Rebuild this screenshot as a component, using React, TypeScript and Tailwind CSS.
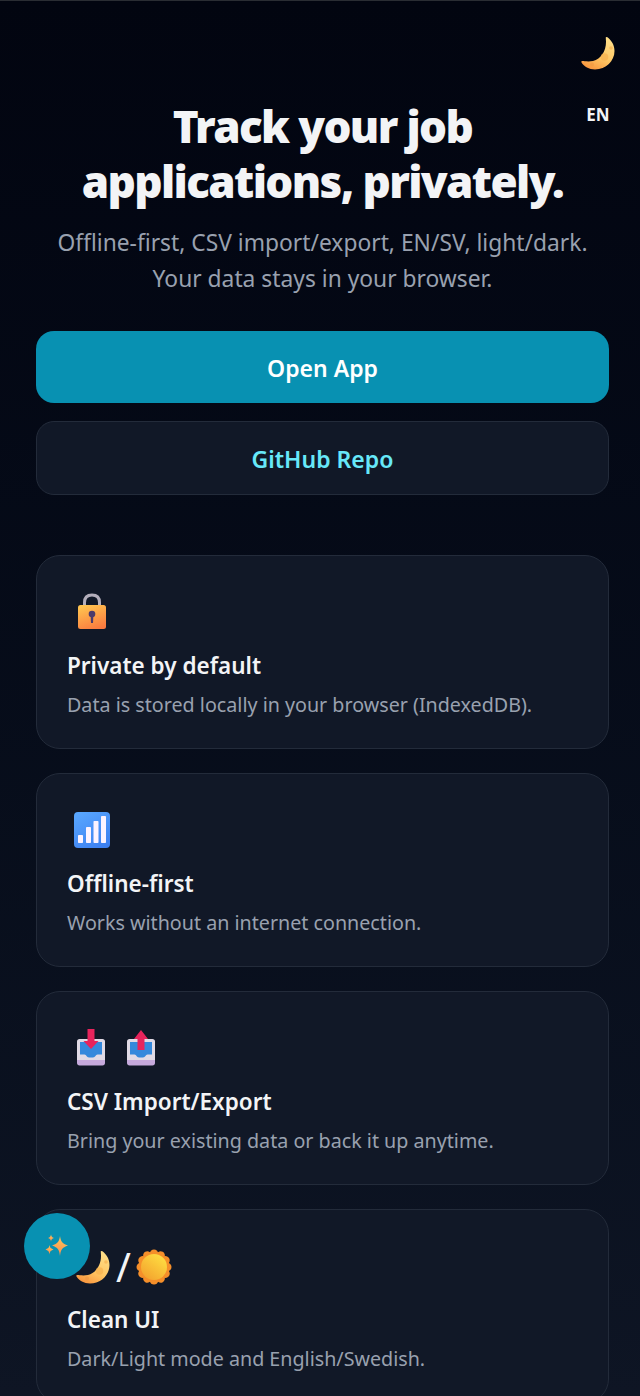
import type { ReactNode } from "react";

function Moon({ size = 36 }: { size?: number }) {
  return (
    <svg width={size} height={size} viewBox="0 0 36 36">
      <defs>
        <linearGradient id="moonFill" x1="0.8" y1="0" x2="0.3" y2="1">
          <stop offset="0" stopColor="#ffe08a" />
          <stop offset="0.6" stopColor="#ffc663" />
          <stop offset="1" stopColor="#f9973f" />
        </linearGradient>
      </defs>
      <path
        d="M26 2 C25.5 2.5 26 4 26 7 C26 16 21 24 13 26 C8 27 4 26 2.500 26 C1.500 26 1 26.500 1.500 27.500 C4 31.500 9 34.500 15 34.500 C26 34.500 34.500 26 34.500 16 C34.500 10 31.500 5.500 27.500 2.300 C27 2 26.400 1.700 26 2 Z"
        fill="url(#moonFill)"
      />
      <circle cx="24.500" cy="22" r="3.800" fill="#f6b14e" opacity="0.7" />
      <circle cx="31" cy="13" r="1.800" fill="#f6b14e" opacity="0.7" />
      <circle cx="12" cy="29.500" r="2" fill="#f09a45" opacity="0.7" />
    </svg>
  );
}

function Sun() {
  const rays = Array.from({ length: 12 }, (_, i) => (i * 360) / 12);
  return (
    <svg width="36" height="36" viewBox="0 0 36 36">
      <defs>
        <linearGradient id="sunFill" x1="0.8" y1="0.1" x2="0.2" y2="0.9">
          <stop offset="0" stopColor="#fedb41" />
          <stop offset="1" stopColor="#f4a62f" />
        </linearGradient>
      </defs>
      {rays.map((r) => (
        <circle key={r} cx="18" cy="4.800" r="4.300" fill="#f58f2a" transform={`rotate(${r} 18 18)`} />
      ))}
      <circle cx="18" cy="18" r="14" fill="#f58f2a" />
      <circle cx="18" cy="18" r="13" fill="url(#sunFill)" />
    </svg>
  );
}

function Lock() {
  return (
    <svg width="36" height="38" viewBox="0 0 36 38">
      <defs>
        <linearGradient id="lockFill" x1="0.3" y1="0" x2="0.7" y2="1">
          <stop offset="0" stopColor="#ffc34f" />
          <stop offset="1" stopColor="#fb7a3f" />
        </linearGradient>
      </defs>
      <path d="M10.500 14 V9.500 C10.500 4.500 13.500 2 18 2 C22.500 2 25.500 4.500 25.500 9.500 V14" fill="none" stroke="#b3aebb" strokeWidth="3" />
      <rect x="4" y="12" width="28" height="24" rx="2.500" fill="url(#lockFill)" />
      <circle cx="18" cy="21" r="3.300" fill="#4b3a6b" />
      <path d="M16.600 22 H19.400 L19 30 H17 Z" fill="#4b3a6b" />
    </svg>
  );
}

function Signal() {
  return (
    <svg width="36" height="36" viewBox="0 0 36 36">
      <defs>
        <linearGradient id="signalFill" x1="0.2" y1="0" x2="0.8" y2="1">
          <stop offset="0" stopColor="#58a6ff" />
          <stop offset="1" stopColor="#3d7ff0" />
        </linearGradient>
      </defs>
      <rect x="0" y="0" width="36" height="36" rx="4" fill="url(#signalFill)" />
      <rect x="4" y="23" width="5" height="8" rx="0.800" fill="#fdf3ff" />
      <rect x="12" y="15" width="5" height="16" rx="0.800" fill="#fdf3ff" />
      <rect x="19.500" y="9" width="5" height="22" rx="0.800" fill="#fdf3ff" />
      <rect x="27" y="4" width="5" height="27" rx="0.800" fill="#fdf3ff" />
    </svg>
  );
}

function Tray({ out }: { out?: boolean }) {
  return (
    <svg width="36" height="36" viewBox="0 0 36 36" overflow="visible">
      <path d="M4 26 H32 V33 C32 34.500 31 35.500 29.500 35.500 H6.500 C5 35.500 4 34.500 4 33 Z" fill="#c6a9dc" />
      <path d="M6.500 9 H29.500 C31 9 32 10 32 11.500 V30 H4 V11.500 C4 10 5 9 6.500 9 Z" fill="#e1dbe6" />
      <path d="M7 12 H29 V24.500 H24.500 C22.500 24.500 22.500 27.500 20 27.500 H16 C13.500 27.500 13.500 24.500 11.500 24.500 H7 Z" fill="#3589dc" />
      {out ? (
        <path d="M18 0 L25 9 H21.500 V20 H14.500 V9 H11 Z" fill="#e8245c" />
      ) : (
        <path d="M14.500 -1 H21.500 V11 H25.500 L18 19 L10.500 11 H14.500 Z" fill="#e8245c" />
      )}
    </svg>
  );
}

function Sparkles() {
  return (
    <svg width="24" height="24" viewBox="0 0 24 24">
      <defs>
        <linearGradient id="sparkFill" x1="0.6" y1="0" x2="0.4" y2="1">
          <stop offset="0" stopColor="#ffc85a" />
          <stop offset="1" stopColor="#fb8a4e" />
        </linearGradient>
      </defs>
      <path d="M15 2 C15.700 7 17 9.500 23 11.500 C17 13.500 15.700 16 15 22 C14.300 16 13 13.500 7 11.500 C13 9.500 14.300 7 15 2 Z" fill="url(#sparkFill)" />
      <path d="M6 0.500 C6.300 2.500 7 3.200 9 4 C7 4.800 6.300 5.500 6 7.500 C5.700 5.500 5 4.800 3 4 C5 3.200 5.700 2.500 6 0.500 Z" fill="url(#sparkFill)" />
      <path d="M4.500 11 C4.900 13.500 5.500 14.200 8.500 15.500 C5.500 16.800 4.900 17.500 4.500 20.500 C4.100 17.500 3.500 16.800 0.500 15.500 C3.500 14.200 4.100 13.500 4.500 11 Z" fill="url(#sparkFill)" />
    </svg>
  );
}

function FeatureCard({ icon, title, text }: { icon: ReactNode; title: string; text: string }) {
  return (
    <div className="h-[194px] shrink-0 rounded-3xl border border-[#232b3a] bg-[#111827] px-[30px] pt-[36px]">
      <div className="flex h-[40px] items-center pl-[7px]">{icon}</div>
      <h3 className="mt-[18px] text-[22.5px] font-semibold leading-[32px] text-gray-100">{title}</h3>
      <p className="mt-[7px] text-[19.7px] leading-[32px] text-gray-400">{text}</p>
    </div>
  );
}

export default function App() {
  return (
    <div className="relative h-[1396px] overflow-hidden border-t border-[#2a2d33] bg-gradient-to-b from-[#020510] to-[#0e1524] font-['Noto_Sans','Open_Sans',sans-serif]">
      <div className="absolute right-[24px] top-[34px] flex flex-col items-center gap-[32px]">
        <Moon />
        <span className="text-[17px] font-bold leading-[24px] text-gray-100">EN</span>
      </div>

      <main className="ml-[36px] flex w-[573px] flex-col">
        <h1 className="mt-[98px] text-center text-[44px] font-black leading-[55px] tracking-[-0.037em] text-gray-100">
          Track your job
          <br />
          applications, privately.
        </h1>
        <p className="mt-[16px] text-center text-[22.8px] leading-[36px] text-gray-400">
          Offline-first, CSV import/export, EN/SV, light/dark.
          <br />
          Your data stays in your browser.
        </p>

        <a className="mt-[34px] flex h-[72px] items-center justify-center rounded-[18px] bg-[#0891b2] pt-[2px] text-[23px] font-semibold text-white">
          Open App
        </a>
        <a className="mt-[18px] flex h-[74px] items-center justify-center rounded-[18px] border border-[#232b3a] bg-[#111827] pt-[2px] text-[23px] font-semibold text-[#67e8f9]">
          GitHub Repo
        </a>

        <div className="mt-[60px] flex flex-col gap-[24px]">
          <FeatureCard icon={<Lock />} title="Private by default" text="Data is stored locally in your browser (IndexedDB)." />
          <FeatureCard icon={<Signal />} title="Offline-first" text="Works without an internet connection." />
          <FeatureCard
            icon={
              <div className="-ml-[1px] flex gap-[14px]">
                <Tray />
                <Tray out />
              </div>
            }
            title="CSV Import/Export"
            text="Bring your existing data or back it up anytime."
          />
          <FeatureCard
            icon={
              <div className="flex items-center gap-[5px] pl-[1px] pt-[2px] text-[40px] font-normal leading-none text-gray-100">
                <Moon />
                <span>/</span>
                <Sun />
              </div>
            }
            title="Clean UI"
            text="Dark/Light mode and English/Swedish."
          />
        </div>
      </main>

      <button className="absolute left-[24px] top-[1212px] flex h-[66px] w-[66px] items-center justify-center rounded-full bg-[#0891b2]">
        <Sparkles />
      </button>
    </div>
  );
}
